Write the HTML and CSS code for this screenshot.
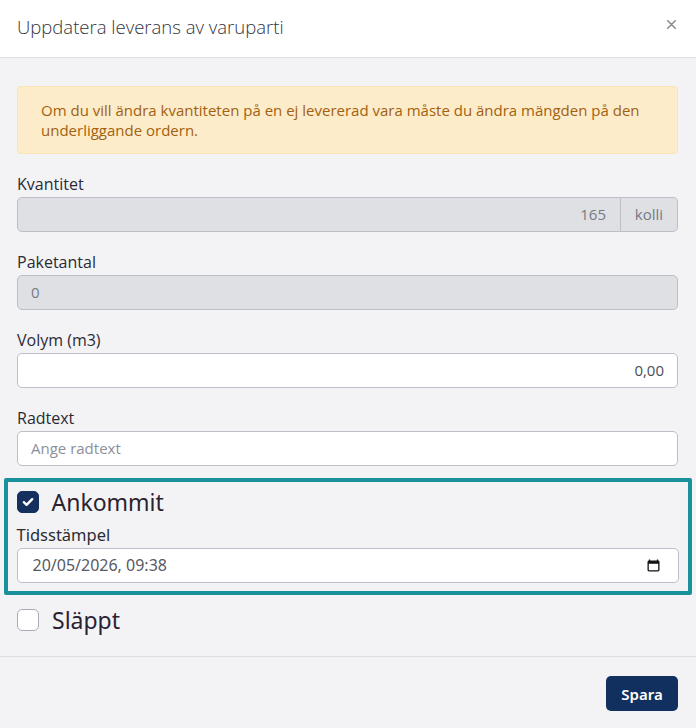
FILE: index.html
```html
<!DOCTYPE html>
<html lang="sv">
<head>
<meta charset="utf-8">
<title>Uppdatera leverans av varuparti</title>
<link rel="stylesheet" href="styles.css">
</head>
<body>
<div class="modal">
  <header class="modal-header">
    <h1 class="modal-title">Uppdatera leverans av varuparti</h1>
    <button class="close" aria-label="Stäng">
      <svg width="9" height="9" viewBox="0 0 9 9"><path d="M0.8 0.8L8.2 8.2M8.2 0.8L0.8 8.2" stroke="#8b8b96" stroke-width="1.6" stroke-linecap="round"/></svg>
    </button>
  </header>
  <main class="modal-body">
    <div class="alert">Om du vill ändra kvantiteten på en ej levererad vara måste du ändra mängden på den underliggande ordern.</div>

    <div class="field">
      <label class="label">Kvantitet</label>
      <div class="input-group">
        <div class="input disabled right grow">165</div>
        <div class="append">kolli</div>
      </div>
    </div>

    <div class="field">
      <label class="label">Paketantal</label>
      <div class="input disabled">0</div>
    </div>

    <div class="field">
      <label class="label">Volym (m3)</label>
      <div class="input right">0,00</div>
    </div>

    <div class="field">
      <label class="label">Radtext</label>
      <div class="input placeholder">Ange radtext</div>
    </div>

    <section class="highlight">
      <div class="check-row">
        <span class="checkbox checked">
          <svg width="12" height="10" viewBox="0 0 12 10"><path d="M1.8 5.2L4.6 7.8L10.2 2.2" fill="none" stroke="#fff" stroke-width="2.4" stroke-linecap="round" stroke-linejoin="round"/></svg>
        </span>
        <span class="check-label">Ankommit</span>
      </div>
      <label class="label alt">Tidsstämpel</label>
      <div class="input date">
        <span class="date-value">20/05/2026, 09:38</span>
        <svg class="cal" width="13" height="13" viewBox="0 0 13 13"><path d="M2.5 0.5v2M10.5 0.5v2" stroke="#111" stroke-width="1.3"/><rect x="1.15" y="2.15" width="10.7" height="9.7" rx="0.8" fill="none" stroke="#111" stroke-width="1.3"/><rect x="1.15" y="2.15" width="10.7" height="2.6" fill="#111"/></svg>
      </div>
    </section>

    <div class="check-row loose">
      <span class="checkbox"></span>
      <span class="check-label">Släppt</span>
    </div>
  </main>
  <footer class="modal-footer">
    <button class="btn">Spara</button>
  </footer>
</div>
</body>
</html>
```
FILE: styles.css
```css
* { box-sizing: border-box; }
html, body { margin: 0; padding: 0; }
body {
  width: 696px;
  height: 728px;
  background: #f3f3f6;
  font-family: "Open Sans", "Noto Sans", sans-serif;
  color: #2b2b33;
  overflow: hidden;
}
.modal { display: flex; flex-direction: column; height: 728px; }
.modal-header {
  height: 58px;
  background: #fff;
  border-bottom: 1px solid #dedfe3;
  display: flex;
  align-items: center;
  justify-content: space-between;
  padding: 0 19px 0 17px;
}
.modal-title {
  margin: 0;
  font-size: 18.5px;
  font-weight: 300;
  color: #35353d;
  line-height: 24px;
  padding-bottom: 3px;
}
.close {
  border: 0;
  background: none;
  padding: 0;
  width: 9px;
  height: 9px;
  margin: 0 1px 8px 0;
  display: flex;
}
.modal-body {
  flex: 1;
  padding: 28px 18px 0 17px;
}
.alert {
  background: #fdecca;
  border: 1px solid #fbe4b4;
  border-radius: 4px;
  color: #a2610f;
  font-size: 15px;
  line-height: 20px;
  padding: 13px 20px 13px 23px;
  margin-bottom: 18px;
}
.field { margin-bottom: 18px; }
.label {
  display: block;
  font-size: 16px;
  line-height: 24px;
  color: #2b2b33;
  margin-bottom: 1px;
}
.input {
  height: 35px;
  border: 1px solid #bcbfc8;
  border-radius: 5px;
  background: #fff;
  font-size: 15px;
  line-height: 33px;
  padding: 0 13px;
  color: #4a4d57;
}
.input.disabled { background: #dfe0e4; color: #767a84; }
.input.right { text-align: right; }
.input.placeholder { color: #8c909a; padding-left: 13px; }
.input-group { display: flex; }
.input-group .grow { flex: 1; border-radius: 5px 0 0 5px; padding-right: 14px; }
.append {
  width: 57px;
  height: 35px;
  border: 1px solid #bcbfc8;
  border-left: 0;
  border-radius: 0 5px 5px 0;
  background: #dfe0e4;
  color: #767a84;
  font-size: 15px;
  line-height: 33px;
  text-align: center;
}
.highlight {
  margin: -6px -14px 0 -13px;
  border: 4.5px solid #18919a;
  border-radius: 2px;
  padding: 7.5px 9px 8px 8.5px;
  font-family: "Noto Sans", sans-serif;
}
.check-row { display: flex; align-items: center; height: 24px; }
.checkbox {
  width: 22px;
  height: 22px;
  border: 1px solid #a9acb6;
  border-radius: 5px;
  background: #fff;
  display: flex;
  align-items: center;
  justify-content: center;
  flex: none;
}
.checkbox.checked { background: #14305f; border-color: #14305f; }
.check-label {
  font-family: "Noto Sans", sans-serif;
  font-size: 23px;
  line-height: 24px;
  color: #2a2230;
  margin-left: 13px;
}
.label.alt {
  font-family: "Noto Sans", sans-serif;
  font-size: 16.5px;
  margin-top: 9px;
  margin-bottom: 1px;
}
.input.date {
  display: flex;
  align-items: center;
  justify-content: space-between;
  padding: 0 18px 0 15px;
  font-family: "Noto Sans", sans-serif;
  font-size: 16px;
  color: #575a64;
}
.check-row.loose { margin-top: 13px; }
.modal-footer {
  height: 72px;
  border-top: 1px solid #dcdde2;
  display: flex;
  align-items: center;
  justify-content: flex-end;
  padding: 0 18px 0 0;
}
.btn {
  width: 72px;
  height: 35px;
  background: #12305f;
  color: #fff;
  border: 0;
  border-radius: 5px;
  font-family: "Noto Sans", sans-serif;
  font-weight: 600;
  font-size: 15px;
  margin-top: 2px;
}
```
